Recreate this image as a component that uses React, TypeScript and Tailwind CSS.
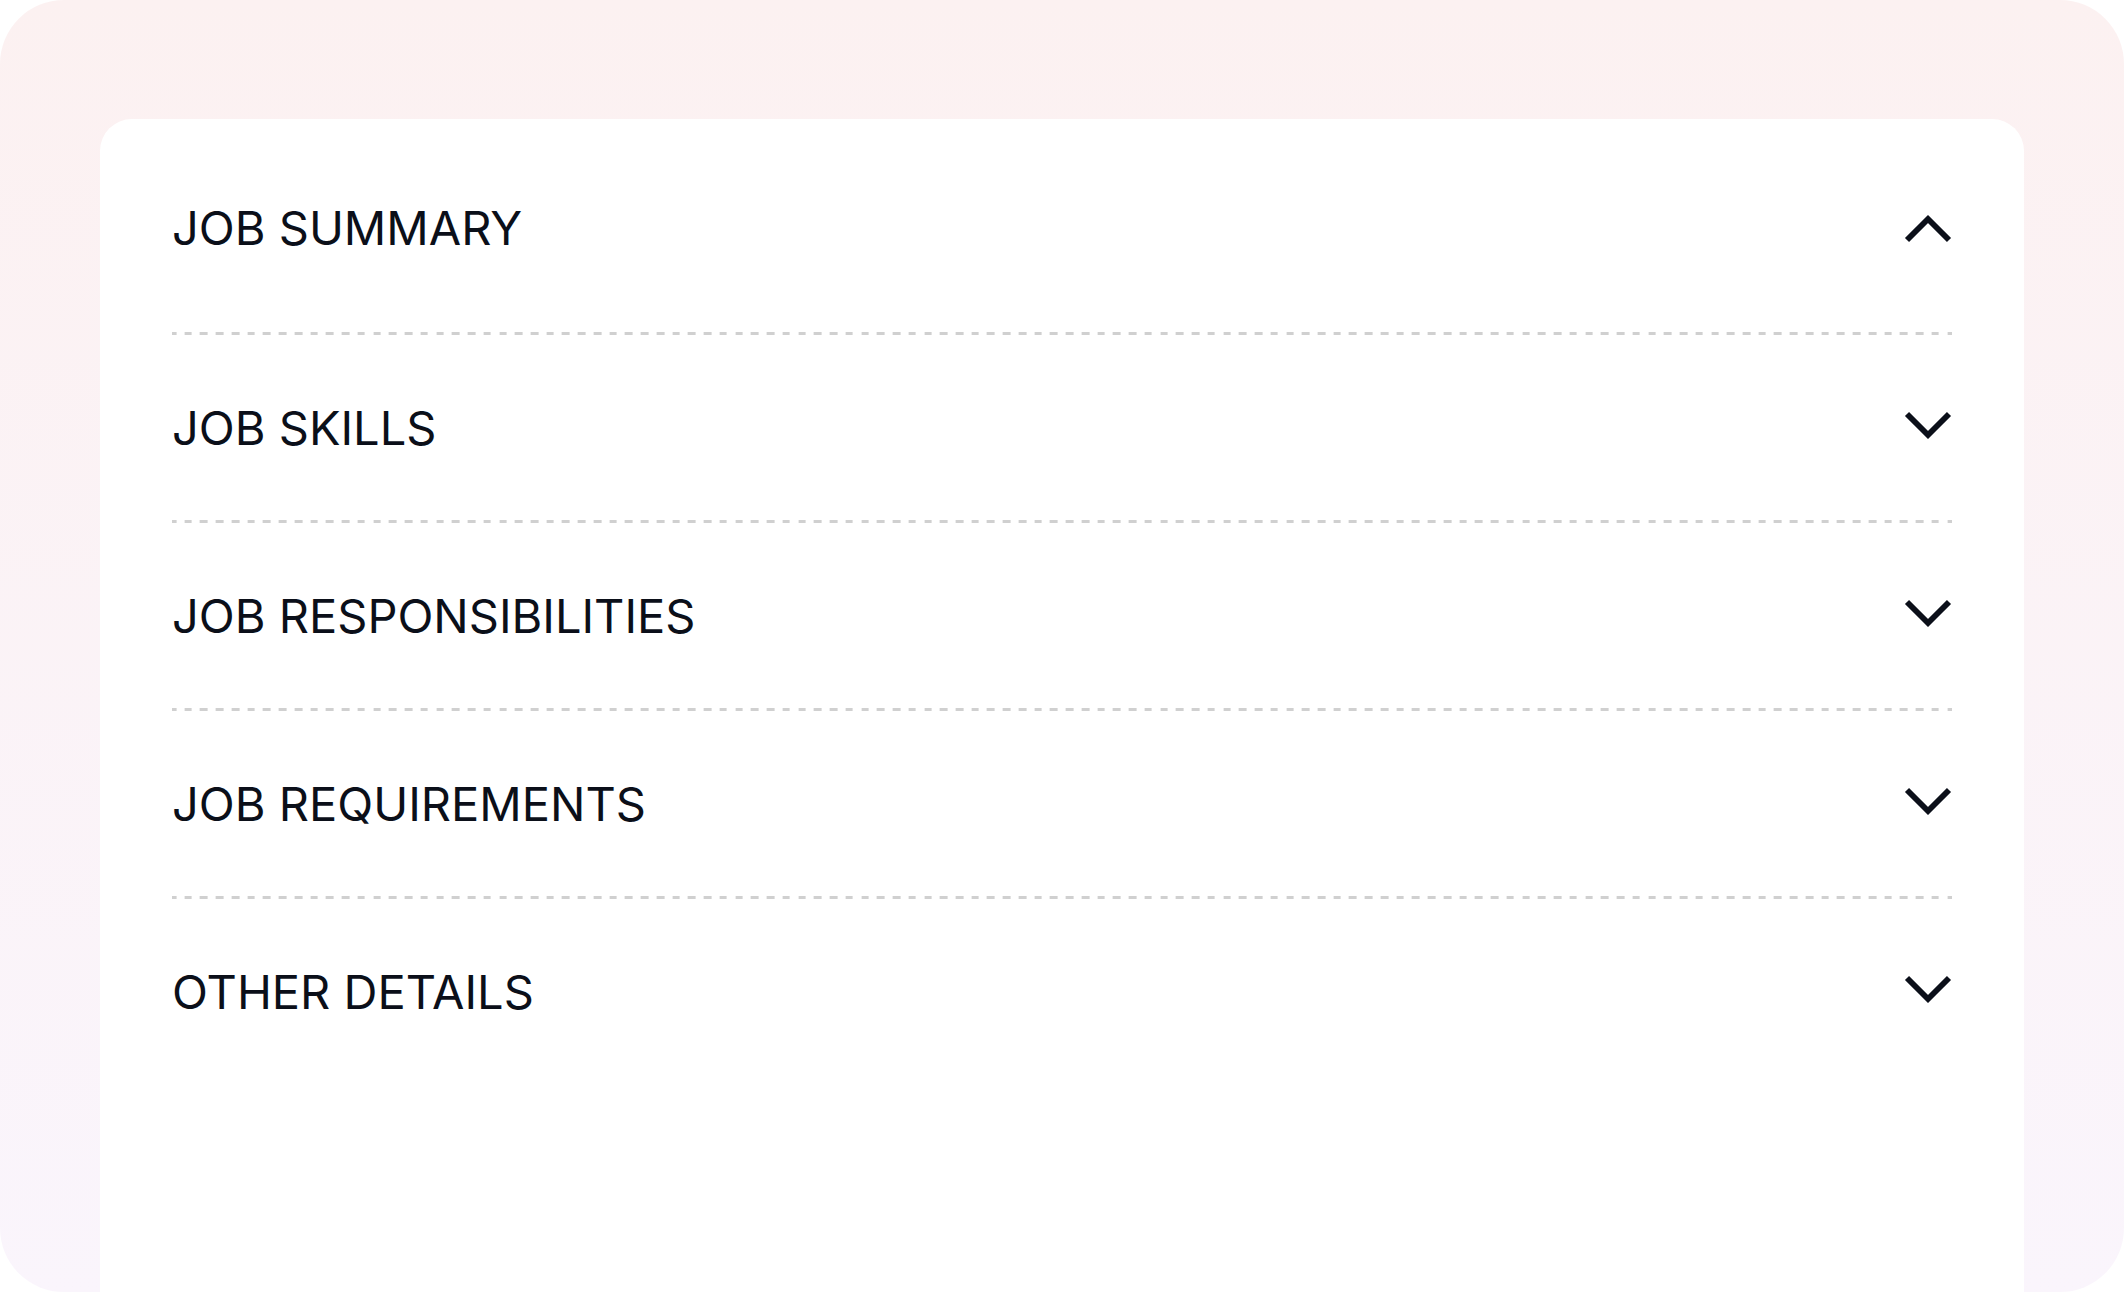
import React from "react";

const items = [
  { title: "JOB SUMMARY", open: true },
  { title: "JOB SKILLS", open: false },
  { title: "JOB RESPONSIBILITIES", open: false },
  { title: "JOB REQUIREMENTS", open: false },
  { title: "OTHER DETAILS", open: false },
];

function Chevron({ up }: { up: boolean }) {
  return (
    <svg width="48" height="30" viewBox="0 0 48 30" fill="none" className="shrink-0 overflow-visible">
      {up ? (
        <path d="M3 27 L24 6 L45 27" stroke="#0b0f19" strokeWidth="5.8" strokeLinejoin="miter" strokeLinecap="butt" />
      ) : (
        <path d="M3 1 L24 22 L45 1" stroke="#0b0f19" strokeWidth="5.8" strokeLinejoin="miter" strokeLinecap="butt" />
      )}
    </svg>
  );
}

function Separator() {
  return (
    <div className="h-[3px] w-full bg-[image:repeating-linear-gradient(to_right,#d0d0d0_0px,#d0d0d0_7.6px,transparent_7.6px,transparent_15.74px)] bg-position-[-3.4px_0px]" />
  );
}

export default function App() {
  return (
    <div className="w-full h-[1292px] bg-white">
      <div className="w-full h-full rounded-[64px] bg-gradient-to-b from-[#fcf1f1] to-[#faf5fc] px-[100px] pt-[119px] overflow-hidden">
        <div className="bg-white rounded-t-[32px] h-full px-[72px] pt-[16px]">
          {items.map((it, i) => (
            <div key={it.title}>
              <div className="h-[185px] flex items-center justify-between">
                <span className="text-[47px] leading-[58px] text-[#0b0f19] font-normal font-['Inter',sans-serif]">
                  {it.title}
                </span>
                <Chevron up={it.open} />
              </div>
              {it.open && <div className="h-[12px]" />}
              {i < items.length - 1 && <Separator />}
            </div>
          ))}
        </div>
      </div>
    </div>
  );
}
